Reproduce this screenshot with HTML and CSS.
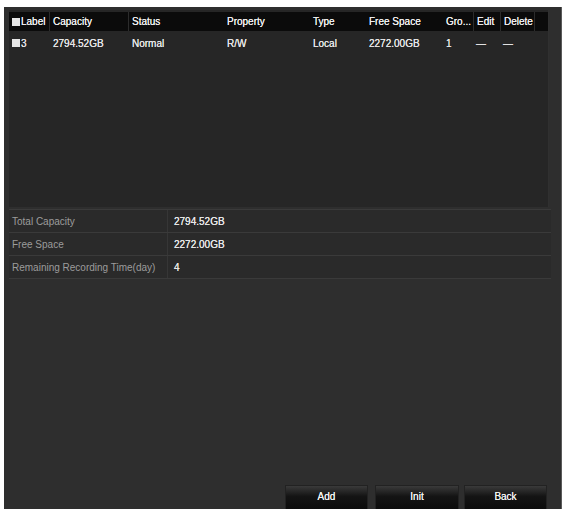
FILE: index.html
```html
<!DOCTYPE html>
<html>
<head>
<meta charset="utf-8">
<link rel="stylesheet" href="styles.css">
</head>
<body>
<div class="panel">
  <div class="disk-table">
    <div class="row head">
      <div class="cell c-label"><span class="check"></span>Label</div>
      <div class="cell sep">Capacity</div>
      <div class="cell sep">Status</div>
      <div class="cell">Property</div>
      <div class="cell">Type</div>
      <div class="cell">Free Space</div>
      <div class="cell">Gro...</div>
      <div class="cell sep">Edit</div>
      <div class="cell sep">Delete</div>
      <div class="cell sep"></div>
    </div>
    <div class="row data">
      <div class="cell c-label"><span class="check"></span>3</div>
      <div class="cell">2794.52GB</div>
      <div class="cell">Normal</div>
      <div class="cell">R/W</div>
      <div class="cell">Local</div>
      <div class="cell">2272.00GB</div>
      <div class="cell">1</div>
      <div class="cell dash">—</div>
      <div class="cell dash">—</div>
      <div class="cell"></div>
    </div>
  </div>

  <div class="summary">
    <div class="sum-row"><div class="sum-key">Total Capacity</div><div class="sum-val">2794.52GB</div></div>
    <div class="sum-row"><div class="sum-key">Free Space</div><div class="sum-val">2272.00GB</div></div>
    <div class="sum-row"><div class="sum-key">Remaining Recording Time(day)</div><div class="sum-val">4</div></div>
  </div>

  <div class="actions">
    <button class="btn">Add</button>
    <button class="btn btn-init">Init</button>
    <button class="btn btn-back">Back</button>
  </div>
</div>
</body>
</html>
```

FILE: styles.css
```css
html, body {
  margin: 0;
  padding: 0;
  background: #ffffff;
}

body {
  font-family: "Liberation Sans", Arial, sans-serif;
  font-size: 10px;
  overflow: hidden;
}

.panel {
  margin: 7px 0 0 4px;
  width: 558px;
  height: 502px;
  background: #2e2e2e;
  border-right: 1px solid #5a5a5a;
  box-sizing: border-box;
  padding: 3px 0 0 5px;
  display: flex;
  flex-direction: column;
  overflow: hidden;
}

/* disk list */
.disk-table {
  width: 540px;
  height: 197px;
  background: #262626;
  box-sizing: border-box;
  padding-top: 2px;
  border-right: 1px solid #303030;
}

.row {
  display: grid;
  grid-template-columns: 40px 79px 95px 86px 56px 77px 31px 27px 34px 1fr;
  align-items: center;
}

.head {
  height: 19px;
  background: #0b0b0b;
  color: #eeeeee;
  text-shadow: 0 0 0.6px #ffffff;
}

.data {
  height: 24px;
  color: #e4e4e4;
  text-shadow: 0 0 0.6px #ffffff;
}

.cell {
  padding-left: 4px;
  white-space: nowrap;
  overflow: hidden;
  height: 100%;
  display: flex;
  align-items: center;
}

.head .sep {
  border-left: 1px solid #2c2c2c;
  padding-left: 3px;
}

.c-label {
  padding-left: 3px;
}

.check {
  display: inline-block;
  width: 8px;
  height: 8px;
  background: #e6e6e6;
  margin-right: 1px;
}

.dash {
  padding-left: 3px;
}

/* capacity summary */
.summary {
  width: 542px;
  margin-top: 2px;
  border-top: 1px solid #3a3a3a;
}

.summary .sum-row {
  display: grid;
  grid-template-columns: 159px 1fr;
  height: 22px;
  border-bottom: 1px solid #3a3a3a;
  background: #2a2a2a;
}

.sum-key {
  color: #9c9c9c;
  padding-left: 3px;
  display: flex;
  align-items: center;
  border-right: 1px solid #363636;
}

.sum-val {
  color: #e6e6e6;
  padding-left: 6px;
  display: flex;
  align-items: center;
  text-shadow: 0 0 0.6px #ffffff;
}

/* buttons */
.actions {
  margin-top: auto;
  display: flex;
  padding-left: 276px;
}

.btn {
  width: 83px;
  height: 24px;
  border: 1px solid #222;
  border-bottom: none;
  background: linear-gradient(#3a3a3a, #141414 45%, #0c0c0c);
  color: #f0f0f0;
  font-family: "Liberation Sans", Arial, sans-serif;
  font-size: 10px;
  padding: 0 0 3px 0;
  margin: 0;
  text-shadow: 0 0 0.6px #ffffff;
}

.btn-init {
  width: 84px;
  margin-left: 7px;
}

.btn-back {
  margin-left: 5px;
}
```
